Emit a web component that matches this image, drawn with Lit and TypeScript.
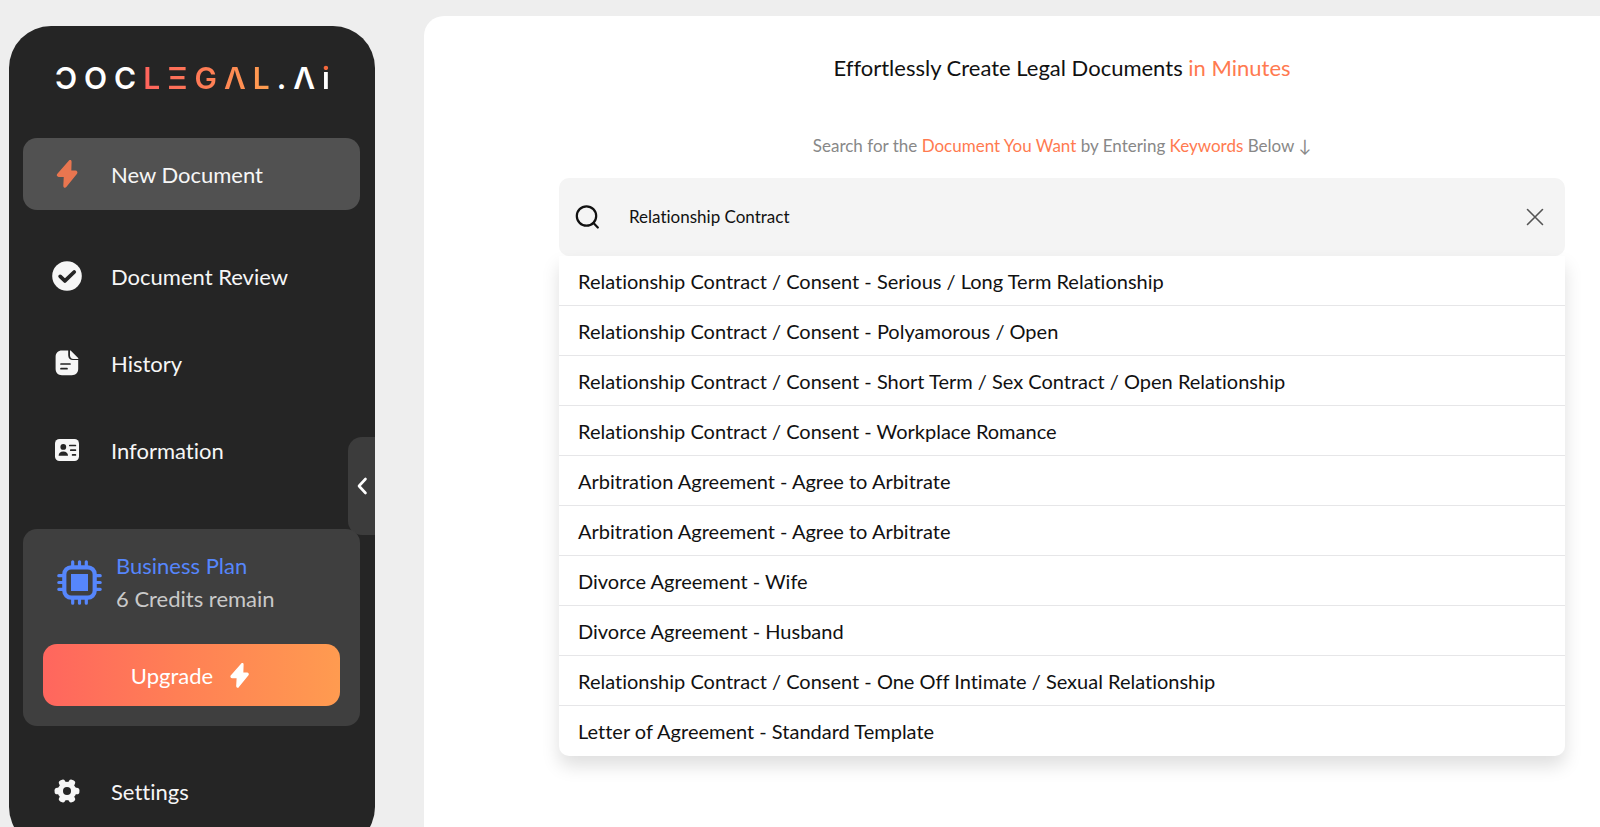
import { LitElement, html, css, svg } from "lit";
import { customElement, state } from "lit/decorators.js";

const bolt = (size: number) => html`
  <svg width=${size} height=${size} viewBox="0 0 28 28" aria-hidden="true">
    <path
      d="M16.6 1 5 14.2c-.8.9-.3 2 .8 2h5.8l-.5 9.6c0 1.200.9 1.500 1.600.700L23.200 13.400c.8-.9.3-2-.8-2h-4.900l.3-9.700c0-1.100-.6-1.400-1.200-.7z"
      fill="currentColor" stroke="currentColor" stroke-width="1.600" stroke-linejoin="round" />
  </svg>`;

const checkIcon = html`
  <svg width="30" height="30" viewBox="0 0 30 30" aria-hidden="true">
    <circle cx="15" cy="15" r="14.800" fill="currentColor" />
    <path d="M8.200 15.400 12.900 19.900 22.200 11" fill="none" stroke="#252525" stroke-width="3.800" stroke-linecap="round" stroke-linejoin="round" />
  </svg>`;

const fileIcon = html`
  <svg width="24" height="26" viewBox="0 0 24 26" aria-hidden="true">
    <path d="M7 .5h6.200v4.800c0 3 1.800 4.700 4.700 4.700h5.300v8.800c0 4-2.500 6.400-6.400 6.400H7C3 25.200.6 22.800.6 18.800V7C.6 3 3 .5 7 .5z" fill="currentColor" />
    <path d="M15 .9c.2-.4.700-.4 1.100 0l7 7c.4.400.3 1-.4 1h-4.200C16.200 8.900 15 7.500 15 5.200z" fill="currentColor" />
    <path d="M6 14h9M6 18.700h6" stroke="#252525" stroke-width="1.700" stroke-linecap="round" />
  </svg>`;

const cardIcon = html`
  <svg width="24" height="22" viewBox="0 0 24 22" aria-hidden="true">
    <rect width="24" height="22" rx="4.500" fill="currentColor" />
    <circle cx="8.300" cy="7.900" r="2.900" fill="#252525" />
    <path d="M3.600 16.800c0-2.600 1.700-4.200 4.700-4.200s4.700 1.600 4.700 4.200z" fill="#252525" />
    <path d="M14.800 6.500h5.600M15.800 11.200h4.600M17.600 15.900h2.800" stroke="#252525" stroke-width="1.700" stroke-linecap="round" />
  </svg>`;

const gearIcon = html`
  <svg width="26" height="26" viewBox="-13 -13 26 26" aria-hidden="true">
    <g fill="currentColor">
      ${[30, 90, 150].map(
        (a) => svg`<rect x="-3.300" y="-12.400" width="6.600" height="24.800" rx="2.600" transform="rotate(${a})" />`
      )}
      <circle r="9.300" />
    </g>
    <circle r="4" fill="#252525" />
  </svg>`;

const chipIcon = html`
  <svg class="chip" width="45" height="45" viewBox="0 0 45 45" fill="none" stroke="currentColor" aria-hidden="true">
    <rect x="7.300" y="7.300" width="30.400" height="30.400" rx="7" stroke-width="4.200" />
    <rect x="14" y="14" width="17" height="17" fill="currentColor" stroke="none" />
    <path
      d="M15.700 1.800V7M22.500 1.800V7M29.300 1.800V7M15.700 38v5.200M22.500 38v5.200M29.300 38v5.200M1.800 15.700H7M1.800 22.500H7M1.800 29.300H7M38 15.700h5.200M38 22.500h5.200M38 29.300h5.200"
      stroke-width="3.200" stroke-linecap="round" />
  </svg>`;

@customElement("app-sidebar")
export class AppSidebar extends LitElement {
  static styles = css`
    :host {
      display: block;
      position: relative;
      box-sizing: border-box;
      padding: 34px 15px 22px 14px;
      border-radius: 42px;
      background: #252525;
      color: #f6f6f6;
      font-size: 22px;
      line-height: 33px;
    }
    a {
      color: inherit;
      text-decoration: none;
    }
    button {
      font: inherit;
      border: 0;
      padding: 0;
      cursor: pointer;
    }
    .logo {
      display: flex;
      justify-content: space-between;
      margin: 0 30px 42px 32px;
      font-family: Inter, sans-serif;
      font-size: 30px;
      line-height: 36px;
      font-weight: 600;
      color: #fff;
    }
    .accent {
      display: flex;
      gap: 7px;
      color: transparent;
      background: linear-gradient(90deg, #ff635c, #ff7d55 50%, #ff9f50);
      background-clip: text;
      -webkit-background-clip: text;
    }
    .dotted {
      color: transparent;
      background: linear-gradient(#f4683c 12px, #fff 12px);
      background-clip: text;
      -webkit-background-clip: text;
    }
    .item {
      display: grid;
      grid-template-columns: 88px 1fr;
      align-items: center;
      height: 72px;
      margin-bottom: 15px;
      border-radius: 14px;
    }
    .item svg {
      justify-self: center;
    }
    .active {
      margin-bottom: 30px;
      background: #515151;
    }
    .active svg {
      color: #e97650;
    }
    .plan {
      position: relative;
      z-index: 1;
      margin: 43px 0 29px;
      padding: 20px;
      border-radius: 14px;
      background: #3f3f3f;
    }
    .summary {
      display: flex;
      align-items: center;
      gap: 14px;
      padding-left: 14px;
      margin-bottom: 29px;
    }
    .chip {
      color: #5686fc;
    }
    .summary p {
      margin: 0;
      color: #c9c9c9;
    }
    .summary .name {
      color: #5686fc;
    }
    .upgrade {
      display: flex;
      align-items: center;
      justify-content: center;
      gap: 14px;
      width: 100%;
      height: 62px;
      border-radius: 14px;
      color: #fff;
      background: linear-gradient(90deg, #ff665e, #ff7f55 45%, #ff9b50);
    }
    .last {
      margin-bottom: 0;
    }
    .collapse {
      position: absolute;
      right: 0;
      top: 411px;
      display: grid;
      place-items: center;
      width: 27px;
      height: 98px;
      border-radius: 14px 0 0 14px;
      color: #fff;
      background: #3c3c3c;
    }
  `;

  render() {
    return html`
      <a class="logo" href="#" aria-label="DocLegal.Ai">
        <span>Ɔ</span><span>O</span><span>C</span>
        <span class="accent"><span>L</span><span>Ξ</span><span>G</span><span>Λ</span><span>L</span></span>
        <span>.</span><span>Λ</span><span class="dotted">i</span>
      </a>
      <nav>
        <a class="item active" href="#" aria-current="page">${bolt(28)}<span>New Document</span></a>
        <a class="item" href="#">${checkIcon}<span>Document Review</span></a>
        <a class="item" href="#">${fileIcon}<span>History</span></a>
        <a class="item" href="#">${cardIcon}<span>Information</span></a>
      </nav>
      <section class="plan">
        <div class="summary">
          ${chipIcon}
          <div>
            <p class="name">Business Plan</p>
            <p>6 Credits remain</p>
          </div>
        </div>
        <button class="upgrade"><span>Upgrade</span>${bolt(25)}</button>
      </section>
      <a class="item last" href="#">${gearIcon}<span>Settings</span></a>
      <button class="collapse" aria-label="Collapse sidebar">
        <svg width="12" height="18" viewBox="0 0 12 18" aria-hidden="true">
          <path d="M9.500 2 3 9l6.500 7" fill="none" stroke="currentColor" stroke-width="2.600" stroke-linecap="round" stroke-linejoin="round" />
        </svg>
      </button>
    `;
  }
}

@customElement("document-search")
export class DocumentSearch extends LitElement {
  @state() private query = "Relationship Contract";

  private results = [
    "Relationship Contract / Consent - Serious / Long Term Relationship",
    "Relationship Contract / Consent - Polyamorous / Open",
    "Relationship Contract / Consent - Short Term / Sex Contract / Open Relationship",
    "Relationship Contract / Consent - Workplace Romance",
    "Arbitration Agreement - Agree to Arbitrate",
    "Arbitration Agreement - Agree to Arbitrate",
    "Divorce Agreement - Wife",
    "Divorce Agreement - Husband",
    "Relationship Contract / Consent - One Off Intimate / Sexual Relationship",
    "Letter of Agreement - Standard Template",
  ];

  static styles = css`
    :host {
      display: block;
    }
    .hint {
      display: block;
      margin-bottom: 20px;
      text-align: center;
      font-size: 17px;
      line-height: 24px;
      color: #888;
    }
    em {
      font-style: normal;
      color: #ff7a50;
    }
    .field {
      display: flex;
      align-items: center;
      height: 78px;
      padding: 0 21px 0 16px;
      border-radius: 10px;
      background: #f4f4f4;
    }
    input {
      flex: 1;
      min-width: 0;
      margin-left: 30px;
      padding: 0;
      border: 0;
      outline: 0;
      background: none;
      font: inherit;
      font-size: 17px;
      line-height: 24px;
      color: #111;
    }
    button {
      display: block;
      padding: 0;
      border: 0;
      background: none;
      font: inherit;
      color: inherit;
      cursor: pointer;
    }
    svg {
      display: block;
    }
    .clear {
      color: #555;
    }
    ul {
      margin: 0;
      padding: 0;
      list-style: none;
      border-radius: 0 0 10px 10px;
      box-shadow: 0 10px 18px rgba(0, 0, 0, 0.13);
    }
    li {
      border-bottom: 1px solid #e6e6e8;
    }
    li:last-child {
      border-color: transparent;
    }
    .result {
      width: 100%;
      padding: 13px 19px 12px;
      text-align: left;
      font-size: 20px;
      line-height: 24px;
      color: #111;
    }
  `;

  render() {
    return html`
      <label class="hint" for="query"
        >Search for the <em>Document You Want</em> by Entering <em>Keywords</em> Below ↓</label
      >
      <div class="field">
        <svg width="24" height="24" viewBox="0 0 24 24" fill="none" stroke="#111" stroke-width="2.200" stroke-linecap="round" aria-hidden="true">
          <circle cx="11.500" cy="11" r="9.700" />
          <path d="m18.500 18 4.300 4.500" />
        </svg>
        <input
          id="query"
          type="text"
          .value=${this.query}
          @input=${(e: Event) => (this.query = (e.target as HTMLInputElement).value)}
        />
        <button class="clear" aria-label="Clear search" @click=${() => (this.query = "")}>
          <svg width="18" height="18" viewBox="0 0 18 18" fill="none" stroke="currentColor" stroke-width="1.600" stroke-linecap="round" aria-hidden="true">
            <path d="m1.500 1.500 15 15M16.500 1.500l-15 15" />
          </svg>
        </button>
      </div>
      <ul>
        ${this.results.map((name) => html`<li><button class="result">${name}</button></li>`)}
      </ul>
    `;
  }
}

@customElement("app-root")
export class AppRoot extends LitElement {
  static styles = css`
    :host {
      display: grid;
      grid-template-columns: 366px 1fr;
      gap: 49px;
      align-items: start;
      box-sizing: border-box;
      height: 100vh;
      overflow: hidden;
      padding-left: 9px;
      background: #eee;
      font-family: Lato, Inter, sans-serif;
      font-variant-ligatures: none;
    }
    app-sidebar {
      margin-top: 26px;
    }
    main {
      box-sizing: border-box;
      min-height: calc(100vh - 16px);
      margin-top: 16px;
      padding: 36px 35px 60px 135px;
      border-radius: 20px 0 0 0;
      background: #fff;
    }
    h1 {
      margin: 0 0 50px;
      text-align: center;
      font-size: 22px;
      line-height: 32px;
      font-weight: 400;
      color: #111;
    }
    .accent {
      color: #ff7a50;
    }
  `;

  render() {
    return html`
      <app-sidebar></app-sidebar>
      <main>
        <h1>Effortlessly Create Legal Documents <span class="accent">in Minutes</span></h1>
        <document-search></document-search>
      </main>
    `;
  }
}
